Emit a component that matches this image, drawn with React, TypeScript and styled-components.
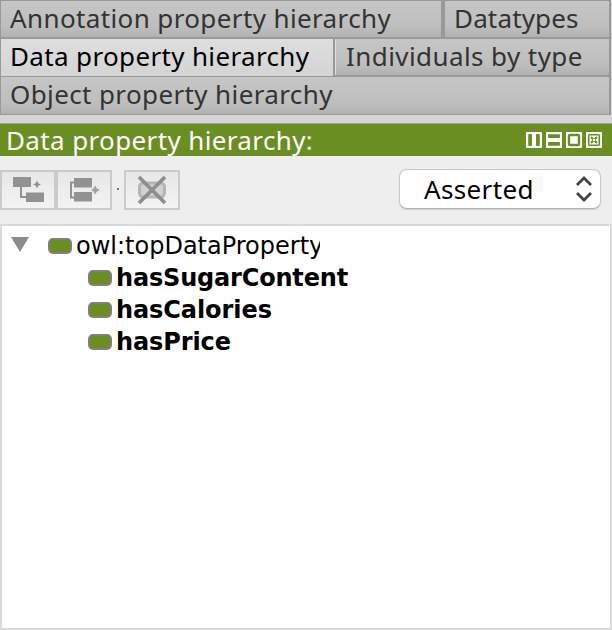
import React from "react";
import styled, { createGlobalStyle } from "styled-components";

const GlobalStyle = createGlobalStyle`
  * { box-sizing: border-box; }
  body { margin: 0; background: #eee; overflow: hidden; }
`;

const Window = styled.div`
  width: 612px;
  height: 630px;
  display: flex;
  flex-direction: column;
  background: #eeeeee;
  font-family: "Noto Sans", "Open Sans", sans-serif;
  font-size: 26px;
  white-space: nowrap;
`;

const TabArea = styled.div`
  height: 124px;
  flex: none;
  background: #d5d5d5;
  border-bottom: 1px solid #a0a0a0;
`;

const TabRow = styled.div<{ $height: number }>`
  display: flex;
  height: ${(p) => p.$height}px;
  width: 611px;
  background: #999;
  padding: 0 2px 0 1px;
`;

const Tab = styled.div<{ $width?: number; $gap?: number; $active?: boolean; $top?: number; $bottom?: number; $pad: number; $light?: boolean }>`
  flex: ${(p) => (p.$width ? `0 0 ${p.$width}px` : "1")};
  margin: ${(p) => p.$top ?? 0}px ${(p) => p.$gap ?? 0}px ${(p) => p.$bottom ?? 1}px 0;
  padding-left: ${(p) => p.$pad}px;
  line-height: ${(p) => (p.$top ? 34 : 35)}px;
  color: ${(p) => (p.$active ? "#000" : "#333")};
  background: ${(p) => (p.$active ? "linear-gradient(#dedede, #d4d4d4)" : "linear-gradient(#c6c6c6, #bebebe 70%, #b2b2b2)")};
  border-left: ${(p) => (p.$light ? "1px solid #dedede" : "0")};
`;

const Label = styled.span<{ $spacing?: number }>`
  letter-spacing: ${(p) => p.$spacing ?? 0}px;
`;

const Header = styled.div`
  height: 32px;
  flex: none;
  background: #6b8e23;
  color: #fff;
  display: flex;
  align-items: center;
  justify-content: space-between;
  padding: 0 10px 0 6px;
  line-height: 32px;
`;

const HeaderIcons = styled.div`
  display: flex;
  gap: 4px;
  svg { display: block; }
`;

const Toolbar = styled.div`
  height: 68px;
  flex: none;
  display: flex;
  align-items: center;
  padding-right: 11px;
`;

const ToolButton = styled.div`
  width: 56px;
  height: 40px;
  border: 2px solid #cbcbcb;
  background: linear-gradient(#e7e7e7, #f3f3f3);
  svg { display: block; filter: blur(0.5px); }
`;

const Dot = styled.div`
  width: 2px;
  height: 2px;
  margin: -3px 5px 0;
  background: #777;
`;

const Select = styled.div`
  width: 202px;
  height: 40px;
  margin: -2px 0 0 auto;
  padding: 0 7px 0 24px;
  display: flex;
  align-items: center;
  justify-content: space-between;
  border: 1px solid #c8c8c8;
  border-bottom-color: #b4b4b4;
  border-radius: 8px;
  background: #fff;
  box-shadow: 0 1px 1px rgba(0, 0, 0, 0.13);
  color: #000;
  line-height: 36px;
`;

const Tree = styled.div`
  flex: 1;
  border: 2px solid #dadada;
  padding-top: 4px;
  background: #fff;
  font-family: "DejaVu Sans", sans-serif;
  font-size: 24px;
  color: #000;
`;

const TreeRow = styled.div<{ $indent: number; $bold?: boolean }>`
  display: flex;
  align-items: center;
  height: 32px;
  line-height: 32px;
  padding-left: ${(p) => p.$indent}px;
  font-weight: ${(p) => (p.$bold ? 700 : 400)};
`;

const Arrow = styled.svg`
  display: block;
  margin: -4px 19px 0 0;
`;

const Swatch = styled.div`
  width: 24px;
  height: 16px;
  margin-right: 4px;
  border: 2px solid #808080;
  border-radius: 5px;
  background: #6b8e23;
`;

const ClippedLabel = styled(Label)`
  width: 244px;
  overflow: hidden;
`;

const AddChildIcon = () => (
  <svg width="52" height="36" fill="#929292">
    <rect x="11" y="5" width="18" height="10" />
    <rect x="24" y="20.5" width="18" height="9.5" />
    <path d="M19 14v11h6" fill="none" stroke="#929292" strokeWidth="2" />
    <path d="M35 8.5l1.3 2.7 2.7 1.3-2.7 1.3-1.3 2.7-1.3-2.7-2.7-1.3 2.7-1.3z" />
  </svg>
);

const AddSiblingIcon = () => (
  <svg width="52" height="36" fill="#929292">
    <rect x="16" y="6" width="18" height="9.5" />
    <rect x="16" y="20" width="18" height="9.5" />
    <path d="M17 10.5h-4v15h4" fill="none" stroke="#929292" strokeWidth="2" />
    <path d="M37 13.5l2 3 3 1.5-3 1.5-2 3-1.5-3-2.5-1.5 2.5-1.5z" fill="#a0a0a0" />
  </svg>
);

const DeleteIcon = () => (
  <svg width="52" height="36" fill="none">
    <rect x="13.5" y="11" width="25" height="14" rx="4" fill="#d2d2d2" stroke="#b5b5b5" strokeWidth="3" />
    <path d="M13 5l26 26M39 5L13 31" stroke="#8e8e8e" strokeWidth="3.8" />
  </svg>
);

const glyphs = {
  columns: <><rect x="2.2" y="2" width="3.8" height="12" rx="1" /><rect x="10" y="2" width="3.8" height="12" rx="1" /></>,
  rows: <><rect x="2" y="2.2" width="12" height="3.8" rx="1" /><rect x="2" y="10" width="12" height="3.8" rx="1" /></>,
  frame: <rect x="3" y="3" width="10" height="10" rx="1" fill="none" stroke="#6b8e23" strokeWidth="2.4" />,
  close: <><rect x="2.7" y="2.7" width="10.6" height="10.6" rx="1" fill="none" stroke="#6b8e23" strokeWidth="1.6" /><path d="M5 5l6 6M11 5l-6 6" stroke="#6b8e23" strokeWidth="2" /><rect x="7" y="7" width="2" height="2" fill="#fff" /></>,
};

const ViewIcon = ({ kind }: { kind: keyof typeof glyphs }) => (
  <svg width="16" height="16" fill="#6b8e23">
    <rect width="16" height="16" fill="#fff" />
    {glyphs[kind]}
  </svg>
);

const properties = [
  { name: "hasSugarContent", spacing: -0.18 },
  { name: "hasCalories", spacing: -0.08 },
  { name: "hasPrice", spacing: -0.1 },
];

export default function App() {
  return (
    <>
      <GlobalStyle />
      <Window>
        <TabArea>
          <TabRow $height={38}>
            <Tab $width={440} $gap={4} $top={1} $pad={9}><Label $spacing={0.38}>Annotation property hierarchy</Label></Tab>
            <Tab $top={1} $pad={9}><Label $spacing={0.15}>Datatypes</Label></Tab>
          </TabRow>
          <TabRow $height={39}>
            <Tab $width={332} $gap={2} $top={1} $pad={9} $active><Label $spacing={0.35}>Data property hierarchy</Label></Tab>
            <Tab $top={1} $bottom={2} $pad={10} $light><Label $spacing={0.42}>Individuals by type</Label></Tab>
          </TabRow>
          <TabRow $height={38}>
            <Tab $pad={9}><Label $spacing={0.38}>Object property hierarchy</Label></Tab>
          </TabRow>
        </TabArea>
        <Header>
          <Label $spacing={0.37}>Data property hierarchy:</Label>
          <HeaderIcons>
            <ViewIcon kind="columns" />
            <ViewIcon kind="rows" />
            <ViewIcon kind="frame" />
            <ViewIcon kind="close" />
          </HeaderIcons>
        </Header>
        <Toolbar>
          <ToolButton><AddChildIcon /></ToolButton>
          <ToolButton><AddSiblingIcon /></ToolButton>
          <Dot />
          <ToolButton><DeleteIcon /></ToolButton>
          <Select>
            <Label $spacing={0.35}>Asserted</Label>
            <svg width="18" height="26" fill="none" stroke="#444" strokeWidth="2.8">
              <path d="M2 9l7-7 7 7M2 17l7 7 7-7" />
            </svg>
          </Select>
        </Toolbar>
        <Tree>
          <TreeRow $indent={9}>
            <Arrow width="18" height="15"><path d="M0 0h18L9 15z" fill="#8c8c8c" /></Arrow>
            <Swatch />
            <ClippedLabel>owl:topDataProperty</ClippedLabel>
          </TreeRow>
          {properties.map((p) => (
            <TreeRow key={p.name} $indent={86} $bold>
              <Swatch />
              <Label $spacing={p.spacing}>{p.name}</Label>
            </TreeRow>
          ))}
        </Tree>
      </Window>
    </>
  );
}
